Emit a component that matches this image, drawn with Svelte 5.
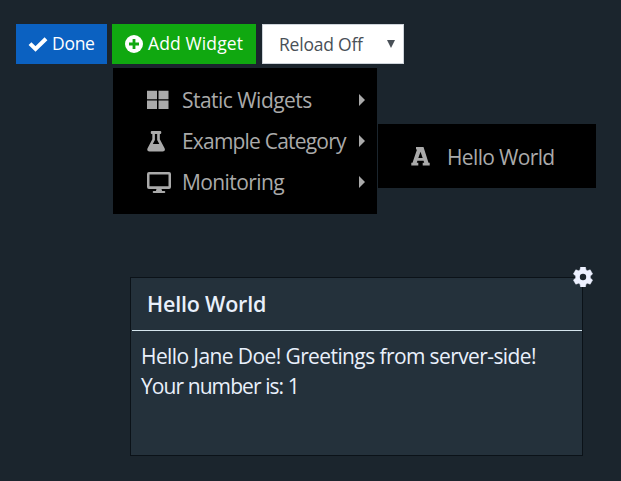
<script>
  const categories = [
    { label: 'Static Widgets', icon: 'grid', spacing: -0.53 },
    { label: 'Example Category', icon: 'flask', spacing: -0.8 },
    { label: 'Monitoring', icon: 'monitor', spacing: -0.6 }
  ];
</script>

<main>
  <div class="toolbar">
    <button class="done">
      <svg width="20" height="16" viewBox="0 0 20 16"><path d="M2 7.6 7.5 13 18 2.8" fill="none" stroke="#fff" stroke-width="4" /></svg>
      <span>Done</span>
    </button>
    <button class="add">
      <svg width="18" height="18" viewBox="0 0 18 18"><circle cx="9" cy="9" r="9" fill="#fff" /><path d="M9 4v10M4 9h10" stroke="#10a810" stroke-width="2.8" /></svg>
      <span>Add Widget</span>
    </button>
    <div class="reload">
      <span>Reload Off</span>
      <svg width="8" height="8" viewBox="0 0 8 8"><path d="M0 0h8L4 8z" fill="#495057" /></svg>
    </div>
  </div>

  <nav class="menu">
    {#each categories as item}
      <div class="item">
        <span class="icon">
          {#if item.icon === 'grid'}
            <svg width="22" height="20" viewBox="0 0 22 20"><path d="M0 .8h10v8.5H0zM11.5.8h10v8.5h-10zM0 10.6h10v8.5H0zM11.5 10.6h10v8.5h-10z" fill="#aaa" /></svg>
          {:else if item.icon === 'flask'}
            <svg width="19" height="21" viewBox="0 0 20 22"><path fill="#aaa" fill-rule="evenodd" d="M5 0h9q1 0 1 1v1q0 1-1 1h-.5v5.5l5 9.6Q19.8 21.5 16.5 21.5h-14Q-.6 21.5.6 18.1l5-9.6V3H5Q4 3 4 2V1q0-1 1-1M8.3 3v6.3l-2.2 4.4h6.9l-2.3-4.4V3z" /></svg>
          {:else}
            <svg width="24" height="21" viewBox="0 0 24 21"><path fill="#aaa" fill-rule="evenodd" d="M2 0h20q2 0 2 2v13q0 2-2 2h-7.5l.6 2h2.2q1 0 1 1t-1 1H6.7q-1 0-1-1t1-1h2.2l.6-2H2q-2 0-2-2V2Q0 0 2 0M2.5 2.5v11.7h19V2.5z" /></svg>
          {/if}
        </span>
        <span class="label" style="letter-spacing: {item.spacing}px">{item.label}</span>
        <svg class="caret" width="6" height="12" viewBox="0 0 6 12"><path d="M0 0 6 6 0 12z" fill="#aaa" /></svg>
      </div>
    {/each}
    <div class="submenu">
      <span class="icon">
        <svg width="19" height="19" viewBox="0 0 19 19"><path fill="#aaa" fill-rule="evenodd" d="M6.5 0h6l5 15.8h1.2v2.7h-7v-2.7h1.5l-.6-2h-6.2l-.6 2h1.5v2.7H.3v-2.7h1.2L6 2.5H5V0zM9.5 4.8 7.3 10.9h4.4z" /></svg>
      </span>
      <span class="label">Hello World</span>
    </div>
  </nav>

  <section class="widget">
    <header><span>Hello World</span></header>
    <p><span class="greeting">Hello Jane Doe! Greetings from server-side!</span><br /><span class="number">Your number is: 1</span></p>
    <svg class="gear" width="20" height="20" viewBox="0 0 20 20"><path d="M7.6 0h4.8l.6 3 1.3.8 2.9-1 2.4 4.1L17.3 9v2l2.3 2.1-2.4 4.1-2.9-1-1.3.8-.6 3H7.6L7 17l-1.3-.8-2.9 1L.4 13.1 2.7 11V9L.4 6.9l2.4-4.1 2.9 1L7 3z" fill="#edf1ff" stroke="#edf1ff" stroke-width=".5" stroke-linejoin="round" /><circle cx="10" cy="10" r="3.2" fill="#1b252d" /></svg>
  </section>
</main>

<style>
  :global(body) { background: #1b252d; }
  main {
    position: relative;
    box-sizing: border-box;
    height: 481px;
    padding: 24px 16px 0;
    overflow: hidden;
    background: #1b252d;
    font-family: "Open Sans", "Noto Sans", sans-serif;
  }
  span { white-space: nowrap; }
  svg { display: block; flex: none; }
  .toolbar { display: flex; height: 40px; }
  button, .reload {
    display: flex;
    align-items: center;
    box-sizing: border-box;
    height: 40px;
    border: 0;
    color: #fff;
    font: 17.5px/24px "Open Sans", "Noto Sans", sans-serif;
  }
  button span { padding-bottom: 2px; }
  .done { width: 91px; margin-right: 5px; padding: 0 0 0 12px; background: #0b61c1; }
  .done span { margin-left: 4px; letter-spacing: -0.3px; }
  .add { width: 144px; margin-right: 6px; padding: 0 0 0 13px; background: #10a810; }
  .add span { margin-left: 5px; letter-spacing: 0.12px; }
  .reload {
    width: 142px;
    padding: 0 8px 0 16px;
    justify-content: space-between;
    border: 1px solid #ced4da;
    background: #fff;
    color: #495057;
  }
  .reload span { letter-spacing: -0.22px; }
  .reload svg { margin-top: -1px; }
  .menu {
    position: absolute;
    left: 113px;
    top: 68px;
    box-sizing: border-box;
    width: 264px;
    height: 146px;
    padding: 11px 12px 0 33px;
    background: #000;
    color: #aaa;
    font-size: 21px;
  }
  .item { display: flex; align-items: center; height: 41px; }
  .item .icon { padding: 1px 0 0 1px; width: 35px; }
  .item .label { padding-top: 1px; }
  .icon { width: 36px; flex: none; }
  .label { letter-spacing: -0.65px; }
  .caret { margin-left: auto; }
  .submenu {
    position: absolute;
    left: 265px;
    top: 56px;
    display: flex;
    align-items: center;
    box-sizing: border-box;
    width: 218px;
    height: 64px;
    padding-left: 33px;
    background: #000;
  }
  .submenu .label { padding-top: 1px; }
  .widget {
    position: relative;
    box-sizing: border-box;
    width: 453px;
    height: 179px;
    margin: 213px 0 0 114px;
    border: 1px solid #0b1218;
    background: #24313b;
    color: #e9f0fb;
    font-size: 21px;
    line-height: 30px;
  }
  header {
    display: flex;
    align-items: center;
    box-sizing: border-box;
    height: 53px;
    margin-left: 1px;
    padding-left: 15px;
    border-bottom: 1px solid #d5e5ed;
    font-weight: 600;
    font-size: 21.5px;
  }
  header span { letter-spacing: -0.2px; }
  p { margin: 10px 0 0 10px; }
  .greeting { letter-spacing: -0.6px; }
  .number { letter-spacing: -0.92px; }
  .gear { position: absolute; left: 442px; top: -11px; }
</style>
